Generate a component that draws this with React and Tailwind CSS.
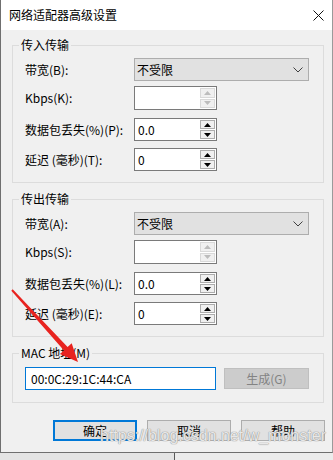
import React from "react";

function Arrow({ up, disabled }) {
  const color = disabled ? "#bcbcbc" : "#000000";
  return (
    <svg width="7" height="4" viewBox="0 0 7 4">
      {up ? (
        <polygon points="0,4 7,4 3.5,0" fill={color} />
      ) : (
        <polygon points="0,0 7,0 3.5,4" fill={color} />
      )}
    </svg>
  );
}

function SpinBox({ value, disabled, h }) {
  return (
    <div className={`flex w-[83px] ${h} border border-[#7a7a7a] bg-white`}>
      <div className="flex-1 flex items-center pl-[3px] text-[12px] leading-none text-black">
        {value}
      </div>
      <div className="flex flex-col w-[17px] p-[1px] gap-[1px]">
        <div
          className={
            disabled
              ? "flex-1 flex items-center justify-center border border-[#d9d9d9] bg-[#f0f0f0]"
              : "flex-1 flex items-center justify-center border border-[#adadad] bg-[#f0f0f0]"
          }
        >
          <Arrow up disabled={disabled} />
        </div>
        <div
          className={
            disabled
              ? "flex-1 flex items-center justify-center border border-[#d9d9d9] bg-[#f0f0f0]"
              : "flex-1 flex items-center justify-center border border-[#adadad] bg-[#f0f0f0]"
          }
        >
          <Arrow disabled={disabled} />
        </div>
      </div>
    </div>
  );
}

function Select() {
  return (
    <div className="flex items-center justify-between w-[175px] h-[23px] border border-[#adadad] bg-[#e1e1e1] pl-[2px] pr-[5px]">
      <span className="text-[12px] leading-none text-black">不受限</span>
      <svg width="10" height="6" viewBox="0 0 10 6">
        <polyline points="0.5,0.5 5,5 9.5,0.5" fill="none" stroke="#404040" strokeWidth="1" />
      </svg>
    </div>
  );
}

function Row({ label, children, mt }) {
  return (
    <div className={`flex items-center ${mt}`}>
      <div className="w-[109px] text-[12px] leading-none text-black whitespace-nowrap">{label}</div>
      {children}
    </div>
  );
}

function Group({ title, children, mt, pt, pb }) {
  return (
    <fieldset className={`border border-[#dcdcdc] ${mt} p-0 m-0 min-w-0`}>
      <legend className="ml-[6px] px-[2px] text-[12px] leading-[16px] text-black">{title}</legend>
      <div className={`pl-[12px] ${pt} ${pb}`}>{children}</div>
    </fieldset>
  );
}

function TransferGroup({ title, keys, mt }) {
  return (
    <Group title={title} mt={mt} pt="pt-[5px]" pb="pb-[11px]">
      <Row label={`带宽(${keys[0]}):`} mt="mt-0">
        <Select />
      </Row>
      <Row label={`Kbps(${keys[1]}):`} mt="mt-[5px]">
        <SpinBox value="" disabled h="h-[24px]" />
      </Row>
      <Row label={`数据包丢失(%)(${keys[2]}):`} mt="mt-[8px]">
        <SpinBox value="0.0" h="h-[23px]" />
      </Row>
      <Row label={`延迟 (毫秒)(${keys[3]}):`} mt="mt-[7px]">
        <SpinBox value="0" h="h-[23px]" />
      </Row>
    </Group>
  );
}

export default function App() {
  return (
    <div className="relative w-[333px] h-[460px] overflow-hidden bg-[#dcdcdc] font-['Noto_Sans_CJK_SC','Microsoft_YaHei',sans-serif]">
      <div className="flex flex-col h-[453px] border-l border-b border-[#6f6f6f] border-r border-r-[#9a9a9a]">
        <div className="h-[30px] bg-white flex items-center justify-between pl-[8px] pr-[8px]">
          <span className="text-[12px] leading-none text-black">网络适配器高级设置</span>
          <svg width="11" height="11" viewBox="0 0 11 11">
            <line x1="0.5" y1="0.5" x2="10.5" y2="10.5" stroke="#111" strokeWidth="1" />
            <line x1="10.5" y1="0.5" x2="0.5" y2="10.5" stroke="#111" strokeWidth="1" />
          </svg>
        </div>
        <div className="flex-1 bg-[#f0f0f0] pl-[11px] pr-[8px] flex flex-col">
          <TransferGroup title="传入传输" keys={["B", "K", "P", "T"]} mt="mt-[7px]" />
          <TransferGroup title="传出传输" keys={["A", "S", "L", "E"]} mt="mt-[8px]" />
          <Group title="MAC 地址(M)" mt="mt-[8px]" pt="pt-[6px]" pb="pb-[12px]">
            <div className="flex items-center">
              <div className="w-[191px] h-[23px] border border-[#0078d7] bg-white flex items-center pl-[5px] text-[12px] leading-none text-black">
                00:0C:29:1C:44:CA
              </div>
              <div className="ml-[8px] w-[85px] h-[21px] border border-[#bfbfbf] bg-[#cccccc] flex items-center justify-center text-[12px] leading-none text-[#838383]">
                生成(G)
              </div>
            </div>
          </Group>
          <div className="flex justify-end gap-[10px] mt-[17px] pr-[0px] mr-[-1px]">
            <div className="w-[84px] h-[21px] border-2 border-[#0078d7] bg-[#e1e1e1] flex items-center justify-center text-[12px] leading-none text-black">
              确定
            </div>
            <div className="w-[84px] h-[21px] border border-[#adadad] bg-[#e1e1e1] flex items-center justify-center text-[12px] leading-none text-black">
              取消
            </div>
            <div className="w-[84px] h-[21px] border border-[#adadad] bg-[#e1e1e1] flex items-center justify-center text-[12px] leading-none text-black">
              帮助
            </div>
          </div>
        </div>
      </div>
      <div className="flex h-[7px]">
        <div className="w-[174px] bg-[#e4e4e4]" />
        <div className="w-[1px] bg-[#5a5a5a]" />
        <div className="flex-1 bg-[#ececec]" />
      </div>

      <div className="absolute left-[100px] top-[428px] text-[16px] leading-none font-['Liberation_Sans',sans-serif] text-white/80 [text-shadow:0_0_1px_#8a8a8a,0_0_1px_#8a8a8a] whitespace-nowrap pointer-events-none">
        https://blog.csdn.net/w_monster
      </div>

      <svg className="absolute left-0 top-0 pointer-events-none" width="333" height="460" viewBox="0 0 333 460">
        <polygon
          points="12.7,289.3 67.6,347 71.7,343.3 78,362 59.9,354.1 64,350.4 11.3,290.7"
          fill="#e8231f"
        />
      </svg>
    </div>
  );
}
